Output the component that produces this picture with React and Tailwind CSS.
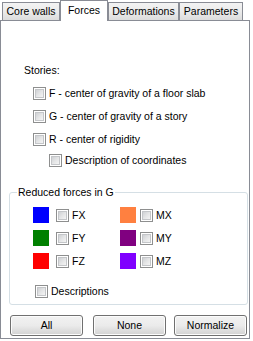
import React from "react";

function Check() {
  return (
    <span className="inline-flex w-[13px] h-[13px] shrink-0 border border-[#8e8f8f] bg-white p-[1px]">
      <span className="block w-full h-full bg-gradient-to-br from-[#cfd1d4] via-[#e4e5e6] to-[#f4f4f4] border border-[#c4c6c9]" />
    </span>
  );
}

function Tab({ label, w, selected }) {
  if (selected) {
    return (
      <div
        className={`relative z-10 mb-[-1px] h-[21px] ${w} bg-white border border-b-0 border-[#898c95] flex items-center justify-center pb-[1px]`}
      >
        {label}
      </div>
    );
  }
  return (
    <div
      className={`h-[18px] ${w} border border-b-0 border-[#898c95] bg-gradient-to-b from-[#f3f3f3] via-[#ebebeb] to-[#dcdcdc] flex items-center justify-center`}
    >
      {label}
    </div>
  );
}

function ForceRow({ c1, l1, c2, l2 }) {
  return (
    <div className="flex items-center h-[16px]">
      <div className="flex items-center w-[110px]">
        <span className={`w-[16px] h-[16px] ml-[23px] ${c1}`} />
        <span className="ml-[7px] flex"><Check /></span>
        <span className="ml-[3px]">{l1}</span>
      </div>
      <div className="flex items-center">
        <span className={`w-[16px] h-[16px] ${c2}`} />
        <span className="ml-[4px] flex"><Check /></span>
        <span className="ml-[3px]">{l2}</span>
      </div>
    </div>
  );
}

function Btn({ children, w }) {
  return (
    <div
      className={`${w} h-[21px] rounded-[3px] border border-[#707070] bg-gradient-to-b from-[#f2f2f2] via-[#ebebeb] to-[#d2d2d2] flex items-center justify-center shadow-[inset_0_0_0_1px_#fcfcfc]`}
    >
      {children}
    </div>
  );
}

export default function App() {
  return (
    <div
      className="w-[253px] h-[341px] bg-white text-black text-[10.5px] leading-[13px] overflow-hidden"
      style={{ fontFamily: '"Liberation Sans", Arial, sans-serif' }}
    >
      <div className="flex items-end h-[20px] pl-[2px]">
        <Tab label="Core walls" w="w-[58px]" />
        <Tab label="Forces" w="w-[48px]" selected />
        <Tab label="Deformations" w="w-[71px]" />
        <Tab label="Parameters" w="w-[64px]" />
      </div>
      <div className="w-[250px] h-[319px] border border-[#898c95] bg-white flex flex-col">
        <div className="mt-[43px] ml-[23px] h-[13px]">Stories:</div>
        <div className="mt-[10px] ml-[32px] flex items-center h-[13px] gap-[3px]">
          <Check />
          <span>F - center of gravity of a floor slab</span>
        </div>
        <div className="mt-[10px] ml-[32px] flex items-center h-[13px] gap-[3px]">
          <Check />
          <span>G - center of gravity of a story</span>
        </div>
        <div className="mt-[10px] ml-[32px] flex items-center h-[13px] gap-[3px]">
          <Check />
          <span>R - center of rigidity</span>
        </div>
        <div className="mt-[8px] ml-[48px] flex items-center h-[13px] gap-[3px]">
          <Check />
          <span>Description of coordinates</span>
        </div>

        <div className="relative mt-[25px] ml-[8px] w-[239px] h-[113px] border border-[#d5dfe5] rounded-[3px] flex flex-col">
          <span className="absolute left-[7px] top-[-7px] bg-white px-[1px] leading-[13px]">
            Reduced forces in G
          </span>
          <div className="mt-[14px] flex flex-col gap-[7px]">
            <ForceRow c1="bg-[#0000ff]" l1="FX" c2="bg-[#ff8040]" l2="MX" />
            <ForceRow c1="bg-[#008000]" l1="FY" c2="bg-[#800080]" l2="MY" />
            <ForceRow c1="bg-[#ff0000]" l1="FZ" c2="bg-[#8000ff]" l2="MZ" />
          </div>
          <div className="mt-[16px] ml-[25px] flex items-center h-[13px] gap-[3px]">
            <Check />
            <span>Descriptions</span>
          </div>
        </div>

        <div className="mt-[10px] ml-[9px] flex">
          <Btn w="w-[73px]">All</Btn>
          <span className="w-[10px]" />
          <Btn w="w-[73px]">None</Btn>
          <span className="w-[8px]" />
          <Btn w="w-[73px]">Normalize</Btn>
        </div>
      </div>
    </div>
  );
}
